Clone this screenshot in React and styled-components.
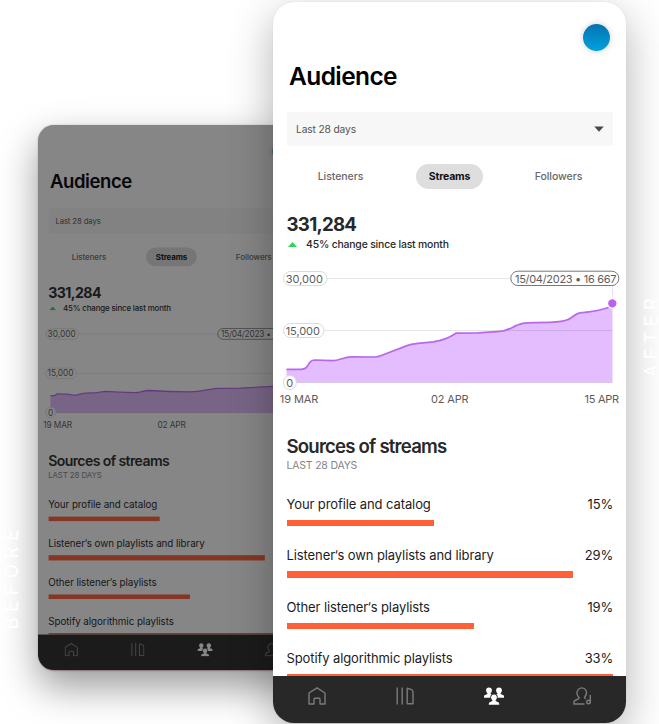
import React from 'react';
import styled, { createGlobalStyle, css } from 'styled-components';

const GlobalStyle = createGlobalStyle`
  html, body { margin: 0; padding: 0; background: #fff; overflow: hidden; }
  * { box-sizing: border-box; }
`;

const Stage = styled.main`
  display: grid;
  width: 659px;
  height: 724px;
  overflow: hidden;
  background: #fff;
  font-family: Inter, "Liberation Sans", sans-serif;
  > * { grid-area: 1 / 1; justify-self: start; align-self: start; }
`;

const Phone = styled.section`
  position: relative;
  display: flex;
  flex-direction: column;
  width: 353px;
  height: 721px;
  margin: 2px 0 0 273px;
  border-radius: 21px;
  overflow: hidden;
  background: #fff;
  box-shadow: 0 14px 44px rgba(0, 0, 0, 0.3), 0 0 1px rgba(150, 60, 80, 0.25);
  ${(p) => p.$dimmed && css`
    margin: 125px 0 0 38px;
    transform: scale(0.756);
    transform-origin: 0 0;
    box-shadow: 0 22px 50px rgba(0, 0, 0, 0.4), 0 0 2px rgba(120, 40, 60, 0.4);
    &::after {
      content: "";
      position: absolute;
      inset: 0;
      background: rgba(13, 13, 13, 0.5);
    }
  `}
`;

const Header = styled.header`
  display: flex;
  flex-direction: column;
  height: 110px;
  padding: 22px 16.5px 0 16px;
  flex: none;
`;

const Avatar = styled.span`
  align-self: flex-end;
  width: 27px;
  height: 27px;
  border-radius: 50%;
  background: linear-gradient(#0572ae, #00a3de);
  box-shadow: 0 0 6px rgba(0, 0, 0, 0.2);
`;

const Title = styled.h1`
  margin: 10px 0 0;
  font-size: 24.5px;
  line-height: 30px;
  font-weight: 600;
  letter-spacing: -0.6px;
  color: #000;
`;

const Select = styled.div`
  display: flex;
  align-items: center;
  justify-content: space-between;
  flex: none;
  height: 34px;
  margin: 0 13.5px;
  padding: 0 8.5px 0 9.5px;
  border-radius: 2px;
  background: #f7f7f7;
  color: #535353;
  font-size: 10.2px;
  letter-spacing: -0.12px;
`;

const Tabs = styled.nav`
  display: grid;
  grid-template-columns: repeat(3, 109px);
  justify-content: center;
  justify-items: center;
  flex: none;
  height: 25px;
  margin-top: 18px;
`;

const Tab = styled.span`
  display: flex;
  align-items: center;
  height: 24.5px;
  padding: 0 12.4px;
  border-radius: 13px;
  font-size: 10.5px;
  letter-spacing: ${(p) => (p.$active ? '-0.2px' : '-0.05px')};
  font-weight: ${(p) => (p.$active ? 700 : 500)};
  color: ${(p) => (p.$active ? '#111' : '#686868')};
  background: ${(p) => (p.$active ? '#dedede' : 'transparent')};
`;

const Total = styled.div`
  flex: none;
  margin: 23px 13.5px 0;
  font-size: 18.7px;
  line-height: 25px;
  font-weight: 700;
  letter-spacing: -0.75px;
  color: #282828;
`;

const Change = styled.div`
  display: flex;
  align-items: center;
  gap: 9px;
  flex: none;
  height: 14px;
  margin: 0 15px;
  font-size: 10.4px;
  font-weight: 500;
  letter-spacing: -0.17px;
  color: #282828;
  svg { display: block; }
`;

const ChartSvg = styled.svg`
  display: block;
  flex: none;
  width: 353px;
  height: 148px;
  margin-top: 11px;
  text { font-size: 11px; fill: #5d5d5d; }
`;

const Sources = styled.section`
  flex: 1;
  min-height: 0;
  overflow: hidden;
  padding: 24px 12.8px 0 13.5px;
`;

const SourcesTitle = styled.h2`
  margin: 0;
  font-size: 18.6px;
  line-height: 24px;
  font-weight: 600;
  letter-spacing: -0.8px;
  color: #282828;
`;

const SourcesPeriod = styled.div`
  font-size: 10.5px;
  line-height: 16px;
  letter-spacing: -0.2px;
  color: #858585;
`;

const SourceList = styled.div`
  display: grid;
  grid-auto-rows: 51.3px;
  margin-top: 22px;
`;

const SourceRow = styled.div`
  display: flex;
  flex-direction: column;
`;

const SourceText = styled.div`
  display: flex;
  justify-content: space-between;
  height: 24px;
  font-size: 13px;
  line-height: 17px;
  letter-spacing: -0.1px;
  color: #1c1c1c;
`;

const Bar = styled.div`
  width: ${(p) => p.$width}px;
  height: 6.4px;
  background: #ff6038;
`;

const NavBar = styled.footer`
  display: grid;
  grid-template-columns: repeat(4, 1fr);
  justify-items: center;
  flex: none;
  height: 47px;
  padding-top: 11px;
  background: #282828;
  color: #7b7b7b;
`;

const NavIcon = styled.svg`
  width: ${(p) => p.$w || 18}px;
  height: 18px;
  fill: none;
  stroke: currentColor;
  stroke-width: 1.4;
  stroke-linejoin: round;
  stroke-linecap: round;
`;

const SideLabel = styled.span`
  writing-mode: vertical-rl;
  transform: rotate(180deg);
  font-size: 18.5px;
  line-height: 14px;
  font-weight: 400;
  letter-spacing: ${(p) => p.$spacing}px;
  color: #fff;
  margin: ${(p) => p.$top}px 0 0 ${(p) => p.$left}px;
`;

const AFTER_LINE =
  'M286.5 369.3H301C306.5 369.3 307.5 366 309.5 362.8Q311.5 360 315 360L333 360.6C339 360.4 344 356.9 352 356.9L375 357Q379 356.8 382 355.3L407 345.6Q411 344.2 416 343.6L433 341.8Q446 340 456 333.2L478 332.8L500 331.4C509 331 514 325 523 323.4Q527 322.6 535 322.6L550 322.3Q563 322 568 319.6C573 317.5 575 313.5 580 312.8C592 312 600 311 612.5 306';
const BEFORE_LINE =
  'M289.5 359.9H295L298.8 357.4Q305 358.4 311.4 358L322 359.5C327 358.8 329 357.2 336 356.7Q345 356.6 351 356.1L361.6 354.4Q380 355.6 401.3 356.1C410 355.8 411 353.4 419 353.2Q448 354.8 474 355C490 354.5 500 350.8 511 350.3L540 350L612.5 346.5';

const BUST =
  'M0 0C2 0 3 1.4 2.9 3.1C2.8 4.6 2.2 5.3 1.6 5.9V6.6L4.4 7.8Q5.3 8.3 5.3 10.4H-5.3Q-5.3 8.3 -4.4 7.8L-1.6 6.6V5.9C-2.2 5.3 -2.8 4.6 -2.9 3.1C-3 1.4 -2 0 0 0Z';

function Chart({ line, startX, endpoint }) {
  return (
    <ChartSvg viewBox="273 262 353 148">
      <path d="M283 278.5H612.5" stroke="#e6e6e6" />
      <path d={`${line}V382.5H${startX}Z`} fill="#e3bdff" />
      <path d="M283 330.5H612.5M290 382.5H612.5" stroke="#000" strokeOpacity=".1" />
      <path d="M612.5 286V300" stroke="#f0dcfb" />
      <path d={line} fill="none" stroke="#b868ed" strokeWidth="1.7" />
      <circle cx="612.3" cy={endpoint} r="4.9" fill="#b964ee" stroke="#fff" strokeWidth="1.4" />
      <g fill="#fff" stroke="#dadada">
        <rect x="283.5" y="271.5" width="43.5" height="14" rx="7" />
        <rect x="283.5" y="323.5" width="40.5" height="14" rx="7" />
        <rect x="283.5" y="375.5" width="12.8" height="14" rx="6.4" />
        <rect x="510.8" y="271.2" width="108" height="14.3" rx="7" stroke="#777" />
      </g>
      <text x="285.7" y="282.5">30,000</text>
      <text x="285.7" y="334.5" letterSpacing="-.08">15,000</text>
      <text x="286.3" y="386.5">0</text>
      <text x="515" y="282.5" letterSpacing="-.3">15/04/2023 • 16 667</text>
      <text x="279.8" y="402.8" letterSpacing="-.1">19 MAR</text>
      <text x="431" y="402.8" letterSpacing="-.17">02 APR</text>
      <text x="584.5" y="402.8" letterSpacing="-.25">15 APR</text>
    </ChartSvg>
  );
}

const SOURCES = [
  ['Your profile and catalog', '15%', 147.3],
  ['Listener‘s own playlists and library', '29%', 286.5],
  ['Other listener‘s playlists', '19%', 187],
  ['Spotify algorithmic playlists', '33%', 326],
];

function AudienceScreen({ dimmed, line, startX, endpoint }) {
  return (
    <Phone $dimmed={dimmed}>
      <Header>
        <Avatar />
        <Title>Audience</Title>
      </Header>
      <Select>
        Last 28 days
        <svg width="10" height="6" viewBox="0 0 10 6"><path d="M.3.5h9.4L5 5.7z" fill="#484848" /></svg>
      </Select>
      <Tabs>
        <Tab>Listeners</Tab>
        <Tab $active>Streams</Tab>
        <Tab>Followers</Tab>
      </Tabs>
      <Total>331,284</Total>
      <Change>
        <svg width="9" height="5" viewBox="0 0 9 5"><path d="M0 5 4.5 0 9 5z" fill="#2fd45c" /></svg>
        45% change since last month
      </Change>
      <Chart line={line} startX={startX} endpoint={endpoint} />
      <Sources>
        <SourcesTitle>Sources of streams</SourcesTitle>
        <SourcesPeriod>LAST 28 DAYS</SourcesPeriod>
        <SourceList>
          {SOURCES.map(([name, share, width]) => (
            <SourceRow key={name}>
              <SourceText><span>{name}</span><span>{share}</span></SourceText>
              <Bar $width={width} />
            </SourceRow>
          ))}
        </SourceList>
      </Sources>
      <NavBar>
        <NavIcon viewBox="0 0 18 18"><path d="M1 6 9 .9 17 6v11h-5v-4.8q0-1-1-1H7q-1 0-1 1V17H1z" /></NavIcon>
        <NavIcon viewBox="0 0 18 18"><path d="M1.2 1v16M6.2 1v16M11.2 1.2 15 2.4Q17 3.2 17 5V16.7h-5.8z" /></NavIcon>
        <NavIcon $w={20} viewBox="0 0 20 18">
          <g fill="#fff" stroke="none">
            <path d={BUST} transform="translate(5 .4)" />
            <path d={BUST} transform="translate(15 .4)" />
            <path d={BUST} transform="translate(10 7.4)" stroke="#282828" strokeWidth="1.6" paintOrder="stroke" />
          </g>
        </NavIcon>
        <NavIcon viewBox="0 0 18 18">
          <path d="M11 17H.9v-1.6q0-1.3 1.2-1.9l3.6-1.9q.8-.6.1-1.4C3.7 7.7 3.7 5 4.7 3.3c1.8-3.3 6.5-3.3 8.2 0c1 1.9.7 4.3-1 6.5q-.8 1 .3 1.7" />
          <path d="M17.3 8.4v6.5" />
          <circle cx="15.5" cy="15" r="1.8" />
        </NavIcon>
      </NavBar>
    </Phone>
  );
}

export default function App() {
  return (
    <>
      <GlobalStyle />
      <Stage>
        <AudienceScreen dimmed line={BEFORE_LINE} startX={289.5} endpoint={346.5} />
        <AudienceScreen line={AFTER_LINE} startX={286.5} endpoint={303.4} />
        <SideLabel $spacing={5.7} $top={524} $left={4}>BEFORE</SideLabel>
        <SideLabel $spacing={5.1} $top={293} $left={644}>AFTER</SideLabel>
      </Stage>
    </>
  );
}
